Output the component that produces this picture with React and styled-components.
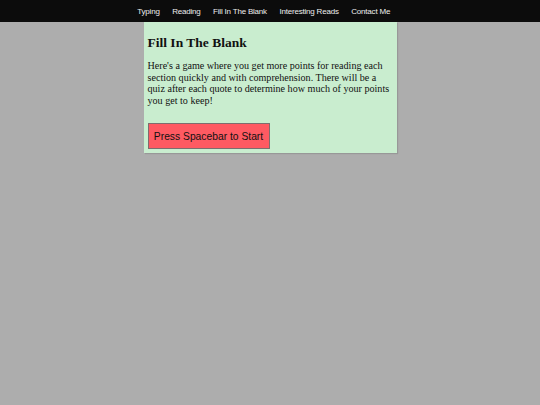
import React from "react";
import styled, { createGlobalStyle } from "styled-components";

const GlobalStyle = createGlobalStyle`
  html, body {
    margin: 0;
    padding: 0;
    background-color: #adadad;
  }
  body {
    min-height: 405px;
  }
`;

const Nav = styled.nav`
  height: 22px;
  background-color: #0c0c0c;
  display: flex;
  justify-content: center;
  align-items: center;
`;

const NavItem = styled.a`
  font-family: "Liberation Sans", Arial, sans-serif;
  font-size: 8px;
  letter-spacing: -0.2px;
  color: #ededed;
  margin-right: 12.5px;
  cursor: pointer;
  text-decoration: none;
`;

const Card = styled.section`
  width: 246px;
  margin: 0 auto;
  padding: 4px 3px 4px 4px;
  background-color: #c9edcf;
  box-shadow: 1px 1px 1px rgba(0, 0, 0, 0.12);
`;

const Title = styled.h2`
  font-family: "Liberation Serif", "Times New Roman", serif;
  font-size: 13.5px;
  font-weight: bold;
  color: #111;
  margin: 9px 0 9px;
`;

const Text = styled.p`
  font-family: "Liberation Serif", "Times New Roman", serif;
  font-size: 10.1px;
  line-height: 11.5px;
  color: #111;
  margin: 0 0 17px;
`;

const StartButton = styled.button`
  font-family: "Liberation Sans", Arial, sans-serif;
  font-size: 10.3px;
  color: #111;
  background-color: #fe5a62;
  border: 1px solid #7d6e6e;
  height: 26px;
  width: 122px;
  padding: 0;
  cursor: pointer;
  display: block;
`;

const links = ["Typing", "Reading", "Fill In The Blank", "Interesting Reads", "Contact Me"];

const App = () => {
  return (
    <>
      <GlobalStyle />
      <Nav>
        {links.map((l) => (
          <NavItem key={l}>{l}</NavItem>
        ))}
      </Nav>
      <Card>
        <Title>Fill In The Blank</Title>
        <Text>
          Here's a game where you get more points for reading each section quickly and with
          comprehension. There will be a quiz after each quote to determine how much of your
          points you get to keep!
        </Text>
        <StartButton>Press Spacebar to Start</StartButton>
      </Card>
    </>
  );
};

export default App;
